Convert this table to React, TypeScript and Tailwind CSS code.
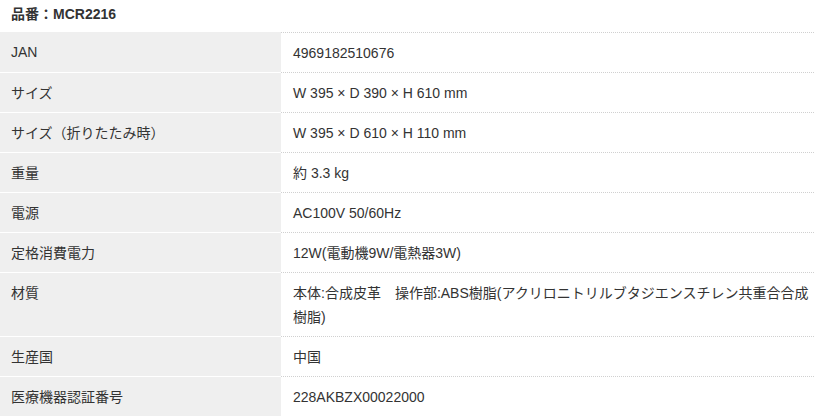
import React from "react";

const rows: { label: string; value: React.ReactNode; tall?: boolean }[] = [
  { label: "JAN", value: "4969182510676" },
  { label: "サイズ", value: "W 395 × D 390 × H 610 mm" },
  { label: "サイズ（折りたたみ時）", value: "W 395 × D 610 × H 110 mm" },
  { label: "重量", value: "約 3.3 kg" },
  { label: "電源", value: "AC100V 50/60Hz" },
  { label: "定格消費電力", value: "12W(電動機9W/電熱器3W)" },
  {
    label: "材質",
    value: (
      <>
        <span className="whitespace-nowrap">本体:合成皮革　操作部:ABS樹脂(アクリロニトリルブタジエンスチレン共重合合成</span>
        <br />
        樹脂)
      </>
    ),
    tall: true,
  },
  { label: "生産国", value: "中国" },
  { label: "医療機器認証番号", value: "228AKBZX00022000" },
];

export default function App() {
  return (
    <div
      className="w-[815px] h-[417px] overflow-hidden bg-white text-[#333] text-[14px]"
      style={{ fontFamily: '"Liberation Sans", "Noto Sans CJK JP", sans-serif' }}
    >
      <div className="h-[32px] pl-[11px] pt-[3px] leading-[22px] font-bold text-[14px]">品番：MCR2216</div>
      <div className="grid grid-cols-[281px_1fr]">
        {rows.map((r, i) => (
          <React.Fragment key={i}>
            <div
              className={`bg-[#efefef] pl-[11px] pr-3 pt-[8px] leading-[24px] ${
                i === 0 ? "" : "border-t border-white"
              } ${r.tall ? "h-[64px]" : "h-[40px]"}`}
            >
              {r.label}
            </div>
            <div
              className={`border-t border-dotted border-[#d0d0d0] pl-[12px] pr-2 pt-[8px] leading-[24px] ${
                r.tall ? "h-[64px]" : "h-[40px]"
              }`}
            >
              {r.value}
            </div>
          </React.Fragment>
        ))}
      </div>
    </div>
  );
}
